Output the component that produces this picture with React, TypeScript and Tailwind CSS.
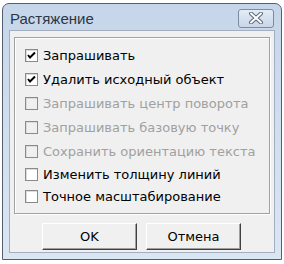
import { useState } from "react";

const options = [
  { label: "Запрашивать", checked: true, disabled: false },
  { label: "Удалить исходный объект", checked: true, disabled: false },
  { label: "Запрашивать центр поворота", checked: false, disabled: true },
  { label: "Запрашивать базовую точку", checked: false, disabled: true },
  { label: "Сохранить ориентацию текста", checked: false, disabled: true },
  { label: "Изменить толщину линий", checked: false, disabled: false },
  { label: "Точное масштабирование", checked: false, disabled: false },
];

function CheckBox({ checked, disabled }: { checked: boolean; disabled: boolean }) {
  return (
    <div
      className={`w-[13px] h-[13px] shrink-0 border border-[#8a8a8a] shadow-[inset_1px_1px_0_#dcdcdc] flex items-center justify-center ${
        disabled ? "bg-[#f0f0f0]" : "bg-white"
      }`}
    >
      {checked && (
        <svg width="9" height="9" viewBox="0 0 9 9">
          <path d="M1 4 L3 6.5 L8 1.5" stroke="#000" strokeWidth="2" fill="none" />
        </svg>
      )}
    </div>
  );
}

export default function App() {
  const [state, setState] = useState(options.map((o) => o.checked));

  return (
    <div className="w-[284px] h-[264px] bg-white pt-[3px] pl-[2px] font-['DejaVu_Sans',sans-serif]">
      <div className="w-[280px] h-[257px] border border-[#545e6c] rounded-t-[7px] bg-gradient-to-b from-[#c6d6ea] to-[#dbe6f3] flex flex-col">
        {/* title bar */}
        <div className="h-[26px] flex items-center justify-between pl-[7px] pr-[7px] pt-[2px]">
          <span className="text-[15px] text-[#2c3644] leading-none font-['Liberation_Sans',sans-serif]">
            Растяжение
          </span>
          <div className="w-[36px] h-[19px] rounded-[3px] border border-[#7c8ba0] bg-gradient-to-b from-[#e4ecf6] to-[#c8d6e8] flex items-center justify-center">
            <svg width="14" height="12" viewBox="0 0 14 12">
              <path
                d="M2 1.5 L12 10.5 M12 1.5 L2 10.5"
                stroke="#5b6777"
                strokeWidth="4"
                strokeLinecap="round"
              />
              <path
                d="M2 1.5 L12 10.5 M12 1.5 L2 10.5"
                stroke="#ffffff"
                strokeWidth="2"
                strokeLinecap="round"
              />
            </svg>
          </div>
        </div>

        {/* client area */}
        <div className="flex-1 mx-[6px] mb-[6px] border border-[#a3afbe] bg-[#f0f0f0] flex flex-col px-[4px] pt-[6px]">
          <div className="h-[177px] border border-[#a0a0a0] shadow-[inset_1px_1px_0_#ffffff,1px_1px_0_#ffffff] flex flex-col pl-[10px] pt-[5px]">
            {options.map((o, i) => (
              <label
                key={o.label}
                className={`flex items-center gap-[5px] ${i < 5 ? "h-[24px]" : "h-[22px]"}`}
                onClick={() =>
                  !o.disabled && setState((s) => s.map((v, j) => (j === i ? !v : v)))
                }
              >
                <CheckBox checked={state[i]} disabled={o.disabled} />
                <span
                  className={`text-[13px] leading-none whitespace-nowrap ${
                    o.disabled ? "text-[#a0a0a0]" : "text-black"
                  }`}
                >
                  {o.label}
                </span>
              </label>
            ))}
          </div>

          <div className="flex gap-[9px] pl-[28px] pt-[9px]">
            <button className="w-[95px] h-[27px] bg-[#f0f0f0] border border-t-[#ffffff] border-l-[#ffffff] border-b-[#404040] border-r-[#404040] shadow-[inset_-1px_-1px_0_#a0a0a0] text-[13px] text-black">
              OK
            </button>
            <button className="w-[95px] h-[27px] bg-[#f0f0f0] border border-t-[#ffffff] border-l-[#ffffff] border-b-[#404040] border-r-[#404040] shadow-[inset_-1px_-1px_0_#a0a0a0] text-[13px] text-black">
              Отмена
            </button>
          </div>
        </div>
      </div>
    </div>
  );
}
